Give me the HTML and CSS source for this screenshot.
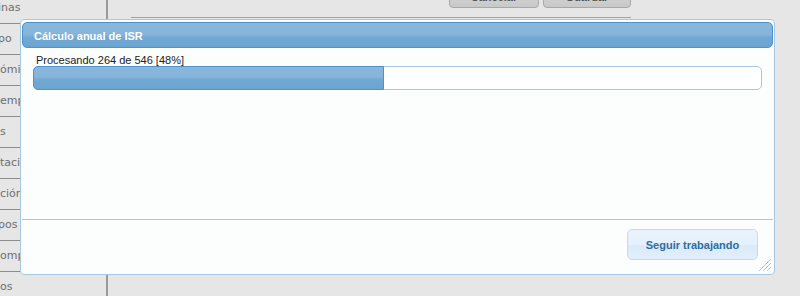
FILE: index.html
```html
<!DOCTYPE html>
<html lang="es">
<head>
    <meta charset="UTF-8">
    <title>Cálculo anual de ISR</title>
    <link rel="stylesheet" href="styles.css">
</head>
<body>
    <div class="pagina">
        <nav class="menu-lateral">
            <a href="#" class="corta">inas</a>
            <a href="#" class="corta">po</a>
            <a href="#">ómi</a>
            <a href="#">emp</a>
            <a href="#">s</a>
            <a href="#">taci</a>
            <a href="#">ción</a>
            <a href="#" class="corta">pos</a>
            <a href="#">omp</a>
            <a href="#">os</a>
        </nav>
        <main class="contenido">
            <div class="barra-acciones">
                <button class="boton-gris" style="width: 90px">Cancelar</button>
                <button class="boton-gris" style="width: 88px">Guardar</button>
            </div>
        </main>
    </div>

    <div class="dialogo">
        <div class="dialogo-titulo">Cálculo anual de ISR</div>
        <div class="dialogo-cuerpo">
            <p class="progreso-texto">Procesando 264 de 546 [48%]</p>
            <div class="progreso">
                <div class="progreso-valor" style="width: 48%"></div>
            </div>
        </div>
        <div class="dialogo-botones">
            <button class="boton-azul">Seguir trabajando</button>
        </div>
        <svg class="redimensionar" width="12" height="12" viewBox="0 0 12 12">
            <g stroke="#5aa0dc" stroke-width="1" stroke-dasharray="1.2 0.6">
                <line x1="0.5" y1="11.5" x2="11.5" y2="0.5"/>
                <line x1="4.5" y1="11.5" x2="11.5" y2="4.5"/>
                <line x1="8.5" y1="11.5" x2="11.5" y2="8.5"/>
            </g>
        </svg>
    </div>
</body>
</html>
```

FILE: styles.css
```css
body, html{
    margin: 0;
    padding: 0;
    height: 100%;
    overflow: hidden;
    background-color: #e6e6e6;
}
.pagina{
    display: flex;
    height: 100%;
}
.menu-lateral{
    width: 106px;
    border-right: 2px solid #9a9a9a;
    display: flex;
    flex-direction: column;
    margin-top: -7px;
}
.menu-lateral a{
    display: block;
    height: 30px;
    line-height: 30px;
    border-bottom: 1px solid #8c8c8c;
    color: #6e6e6e;
    text-decoration: none;
    font-family: "DejaVu Sans", sans-serif;
    font-size: 11px;
    flex-shrink: 0;
}
.menu-lateral a.corta{
    text-indent: -2px;
}
.contenido{
    flex: 1;
}
.barra-acciones{
    margin: -18px 0 0 23px;
    width: 500px;
    display: flex;
    justify-content: flex-end;
    gap: 4px;
    padding-bottom: 9px;
    border-bottom: 1px solid #a3a3a3;
}
.boton-gris{
    height: 26px;
    padding: 4px 0 0;
    border: 1px solid #a8a8a8;
    border-radius: 4px;
    background: linear-gradient(#dadada, #c9c9c9);
    font-family: "Liberation Sans", Arial, sans-serif;
    font-size: 11px;
    font-weight: bold;
    color: #555;
}

/* dialogo modal */
.dialogo{
    position: absolute;
    left: 20px;
    top: 19px;
    width: 755px;
    height: 256px;
    box-sizing: border-box;
    padding: 2px 1px;
    border: 1px solid #a6c9e2;
    border-radius: 4px;
    background-color: #fcfdfd;
    display: flex;
    flex-direction: column;
    font-family: "Liberation Sans", Arial, sans-serif;
    font-size: 11px;
    color: #222;
}
.dialogo-titulo{
    height: 26px;
    box-sizing: border-box;
    padding: 1px 11px 0;
    line-height: 24px;
    border: 1px solid #4a93cf;
    border-radius: 5px;
    background: linear-gradient(#8ab7dc 0%, #86b4da 48%, #72a9d4 60%, #6aa4d1 100%);
    color: white;
    font-weight: bold;
}
.dialogo-cuerpo{
    flex: 1;
    padding: 6px 11px 0;
}
.progreso-texto{
    margin: 0 0 0 3px;
    line-height: 12px;
}
.progreso{
    height: 24px;
    box-sizing: border-box;
    border: 1px solid #a6c9e2;
    border-radius: 5px;
    background-color: #fff;
}
.progreso-valor{
    height: 100%;
    margin: -1px 0 0 -1px;
    border: 1px solid #4a93cf;
    border-radius: 5px 0 0 5px;
    background: linear-gradient(#8ab7dc 0%, #86b4da 45%, #72a9d4 58%, #6aa4d1 100%);
}
.dialogo-botones{
    height: 53px;
    box-sizing: border-box;
    border-top: 1px solid #a6c9e2;
    padding: 9px 15px 0 0;
    display: flex;
    justify-content: flex-end;
    align-items: flex-start;
}
.boton-azul{
    width: 131px;
    height: 31px;
    border: 1px solid #c5dbec;
    border-radius: 5px;
    background: linear-gradient(#eaf3fd 0%, #e4f0fc 50%, #dbeaf9 54%, #e2eefb 100%);
    color: #2e6e9e;
    font-family: "Liberation Sans", Arial, sans-serif;
    font-size: 11px;
    font-weight: bold;
    cursor: pointer;
}
.redimensionar{
    position: absolute;
    right: 3px;
    bottom: 3px;
}
```
